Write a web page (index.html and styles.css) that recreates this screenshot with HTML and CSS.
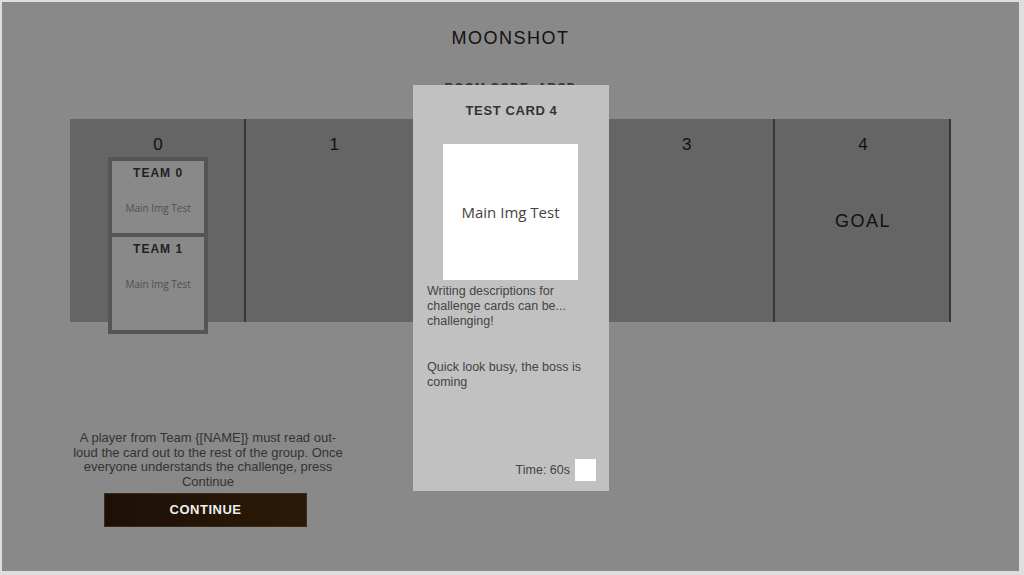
FILE: index.html
```html
<!DOCTYPE html>
<html>
<head>
<meta charset="utf-8">
<link rel="stylesheet" href="styles.css">
</head>
<body>
<div class="screen">
  <h1 class="title">MOONSHOT</h1>
  <div class="room">ROOM CODE: ABCD</div>
  <div class="board">
    <div class="col">
      <div class="num">0</div>
      <div class="teams">
        <div class="team">
          <div class="team-name">TEAM 0</div>
          <div class="team-img">Main Img Test</div>
        </div>
        <div class="team team-last">
          <div class="team-name">TEAM 1</div>
          <div class="team-img">Main Img Test</div>
        </div>
      </div>
    </div>
    <div class="col"><div class="num">1</div></div>
    <div class="col"><div class="num">2</div></div>
    <div class="col"><div class="num">3</div></div>
    <div class="col"><div class="num">4</div><div class="goal">GOAL</div></div>
  </div>
  <div class="bottom">
    <p class="instructions">A player from Team {[NAME]} must read out-loud the card out to the rest of the group. Once everyone understands the challenge, press Continue</p>
    <button class="continue">CONTINUE</button>
  </div>
  <div class="card">
    <div class="card-title">TEST CARD 4</div>
    <div class="card-img">Main Img Test</div>
    <p class="card-desc">Writing descriptions for challenge cards can be... challenging!</p>
    <p class="card-desc card-desc2">Quick look busy, the boss is coming</p>
    <div class="timer"><span>Time: 60s</span><span class="timer-box"></span></div>
  </div>
</div>
</body>
</html>
```
FILE: styles.css
```css
html, body {
  margin: 0;
  padding: 0;
  background: #dedede;
  width: 1024px;
  height: 575px;
  overflow: hidden;
}
.screen {
  position: relative;
  margin: 2px 5px 0 2px;
  height: 569px;
  background: #898989;
  display: flex;
  flex-direction: column;
  font-family: "Liberation Sans", Arial, sans-serif;
}
.title {
  margin: 25px 0 0;
  font-size: 18px;
  line-height: 22px;
  font-weight: normal;
  letter-spacing: 1.5px;
  text-align: center;
  color: #111;
}
.room {
  margin-top: 31px;
  height: 16px;
  font-size: 12px;
  line-height: 16px;
  font-weight: bold;
  letter-spacing: 1px;
  text-align: center;
  color: #333;
}
.board {
  margin: 23px 0 0 68px;
  width: 881px;
  height: 203px;
  background: #656565;
  display: grid;
  grid-template-columns: repeat(5, 1fr);
  grid-template-rows: 203px;
}
.col {
  border-right: 2px solid #363636;
  display: flex;
  flex-direction: column;
  align-items: center;
  min-width: 0;
  min-height: 0;
  padding-left: 2px;
}
.num {
  margin-top: 16px;
  font-size: 17px;
  line-height: 20px;
  color: #111;
}
.goal {
  margin-top: 55px;
  font-size: 18px;
  line-height: 22px;
  letter-spacing: 1.5px;
  color: #111;
}
.teams {
  flex: none;
  margin-top: 2px;
  width: 92px;
  border: 4px solid #555;
  background: #555;
  display: flex;
  flex-direction: column;
  gap: 4px;
  position: relative;
  z-index: 1;
}
.team {
  height: 72px;
  background: #898989;
  display: flex;
  flex-direction: column;
  align-items: center;
}
.team-last {
  height: 93px;
}
.team-name {
  margin-top: 5px;
  font-size: 12px;
  line-height: 14px;
  font-weight: bold;
  letter-spacing: 1px;
  color: #222;
}
.team-img {
  margin-top: 22px;
  font-family: "Open Sans", "Noto Sans", sans-serif;
  font-size: 10px;
  line-height: 12px;
  color: #505050;
}
.bottom {
  margin: 109px 0 0 70px;
  width: 272px;
  display: flex;
  flex-direction: column;
}
.instructions {
  margin: 0;
  font-size: 13px;
  line-height: 14.7px;
  text-align: center;
  color: #333;
}
.continue {
  margin: 3px 0 0 32px;
  width: 203px;
  height: 34px;
  border: 1px solid #3a2a18;
  background: linear-gradient(90deg, #1c1006, #2b1a08);
  color: #eee;
  font-family: "Liberation Sans", Arial, sans-serif;
  font-size: 13px;
  font-weight: bold;
  letter-spacing: 0.5px;
  padding: 0;
}
.card {
  position: absolute;
  left: 411px;
  top: 83px;
  width: 196px;
  height: 406px;
  box-sizing: border-box;
  background: #c1c1c1;
  padding: 0 13px 0 14px;
  display: flex;
  flex-direction: column;
  z-index: 2;
}
.card-title {
  margin-top: 18px;
  height: 16px;
  font-size: 13px;
  line-height: 16px;
  font-weight: bold;
  letter-spacing: 0.6px;
  text-align: center;
  color: #333;
}
.card-img {
  margin: 25px 0 0 16px;
  width: 135px;
  height: 136px;
  background: #fff;
  display: flex;
  align-items: center;
  justify-content: center;
  font-family: "Open Sans", "Noto Sans", sans-serif;
  font-size: 15px;
  color: #444;
}
.card-desc {
  margin: 4px 0 0;
  font-size: 12.5px;
  line-height: 15px;
  color: #444;
}
.card-desc2 {
  margin-top: 31px;
}
.timer {
  margin-top: auto;
  margin-bottom: 10px;
  display: flex;
  align-items: center;
  justify-content: flex-end;
  gap: 5px;
  font-size: 12.5px;
  color: #444;
}
.timer-box {
  width: 21px;
  height: 22px;
  background: #fff;
}
```
